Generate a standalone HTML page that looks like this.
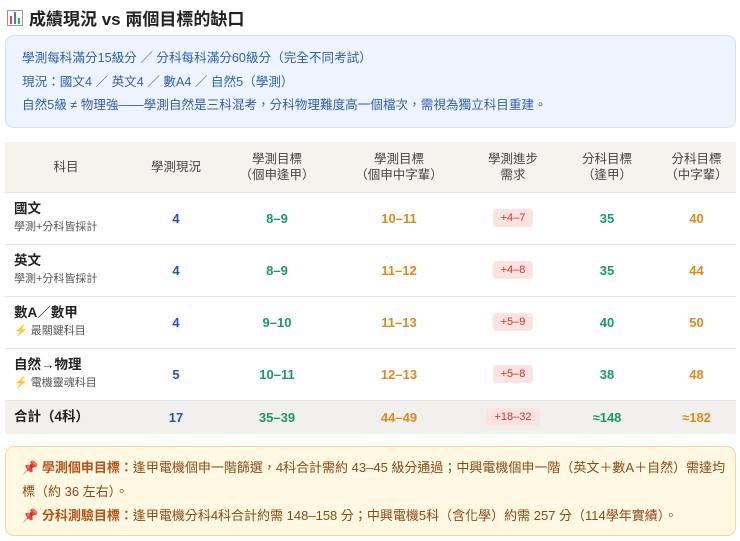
<!DOCTYPE html>
<html><head><meta charset="utf-8"><style>
*{margin:0;padding:0;box-sizing:border-box}
body{width:740px;height:541px;background:#fff;font-family:"Liberation Sans","Noto Sans CJK TC",sans-serif;overflow:hidden;position:relative}
.title{position:absolute;left:7px;top:5px;font-size:17px;font-weight:bold;color:#222;display:flex;align-items:center;gap:6px}
.ic{width:16px;height:16px;border:1px solid #999;background:#fff;display:flex;align-items:flex-end;gap:2px;padding:1px 2px}
.ic i{display:block;width:3px}
.info{position:absolute;left:5px;top:35px;width:731px;height:93px;background:#eef4fd;border:1px solid #cfe0f5;border-radius:9px;padding:11px 16px;color:#2f5fae;font-size:12.6px;line-height:23.5px}
table{position:absolute;left:5px;top:142px;width:731px;border-collapse:collapse;font-size:13px}
th{background:#f5f3ee;font-weight:normal;color:#444;height:50px;font-size:12.5px;line-height:16px}
td{height:52px;text-align:center;font-weight:bold;border-top:1px solid #e4e4e4;vertical-align:middle}
td.s{text-align:left;padding-left:9px;font-weight:bold;color:#222;font-size:13.5px;line-height:18px}
td.s small{display:block;font-weight:normal;font-size:11px;color:#555}
.b{color:#2450c0}.g{color:#1a9a6a}.o{color:#dd8a1c}
.p{display:inline-block;background:#fde2e2;color:#c0392b;font-size:11px;font-weight:normal;padding:3px 8px;border-radius:4px;vertical-align:middle}
tr.t td{height:34px;background:#f1f0ed}
.note{position:absolute;left:5px;top:446px;width:731px;height:90px;background:#fff8e3;border:1px solid #f3d890;border-radius:9px;padding:9px 6px 9px 16px;color:#8a4a12;font-size:13px;line-height:24px}
.note b{color:#b5531a}
</style></head><body>
<div class="title"><span class="ic"><i style="height:8px;background:#e44"></i><i style="height:12px;background:#3a7bd5"></i><i style="height:6px;background:#3b3"></i></span>成績現況 vs 兩個目標的缺口</div>
<div class="info">學測每科滿分15級分 ／ 分科每科滿分60級分（完全不同考試）<br>現況：國文4 ／ 英文4 ／ 數A4 ／ 自然5（學測）<br>自然5級 ≠ 物理強——學測自然是三科混考，分科物理難度高一個檔次，需視為獨立科目重建。</div>
<table>
<colgroup><col style="width:122px"><col style="width:98px"><col style="width:104px"><col style="width:140px"><col style="width:88px"><col style="width:100px"><col style="width:79px"></colgroup>
<tr><th>科目</th><th>學測現況</th><th>學測目標<br>（個申逢甲）</th><th>學測目標<br>（個申中字輩）</th><th>學測進步<br>需求</th><th>分科目標<br>（逢甲）</th><th>分科目標<br>（中字輩）</th></tr>
<tr><td class="s">國文<small>學測+分科皆採計</small></td><td class="b">4</td><td class="g">8–9</td><td class="o">10–11</td><td><span class="p">+4–7</span></td><td class="g">35</td><td class="o">40</td></tr>
<tr><td class="s">英文<small>學測+分科皆採計</small></td><td class="b">4</td><td class="g">8–9</td><td class="o">11–12</td><td><span class="p">+4–8</span></td><td class="g">35</td><td class="o">44</td></tr>
<tr><td class="s">數A／數甲<small>⚡ 最關鍵科目</small></td><td class="b">4</td><td class="g">9–10</td><td class="o">11–13</td><td><span class="p">+5–9</span></td><td class="g">40</td><td class="o">50</td></tr>
<tr><td class="s">自然→物理<small>⚡ 電機靈魂科目</small></td><td class="b">5</td><td class="g">10–11</td><td class="o">12–13</td><td><span class="p">+5–8</span></td><td class="g">38</td><td class="o">48</td></tr>
<tr class="t"><td class="s">合計（4科）</td><td class="b">17</td><td class="g">35–39</td><td class="o">44–49</td><td><span class="p">+18–32</span></td><td class="g">≈148</td><td class="o">≈182</td></tr>
</table>
<div class="note">📌 <b>學測個申目標：</b>逢甲電機個申一階篩選，4科合計需約 43–45 級分通過；中興電機個申一階（英文＋數A＋自然）需達均標（約 36 左右）。<br>📌 <b>分科測驗目標：</b>逢甲電機分科4科合計約需 148–158 分；中興電機5科（含化學）約需 257 分（114學年實績）。</div>
</body></html>
